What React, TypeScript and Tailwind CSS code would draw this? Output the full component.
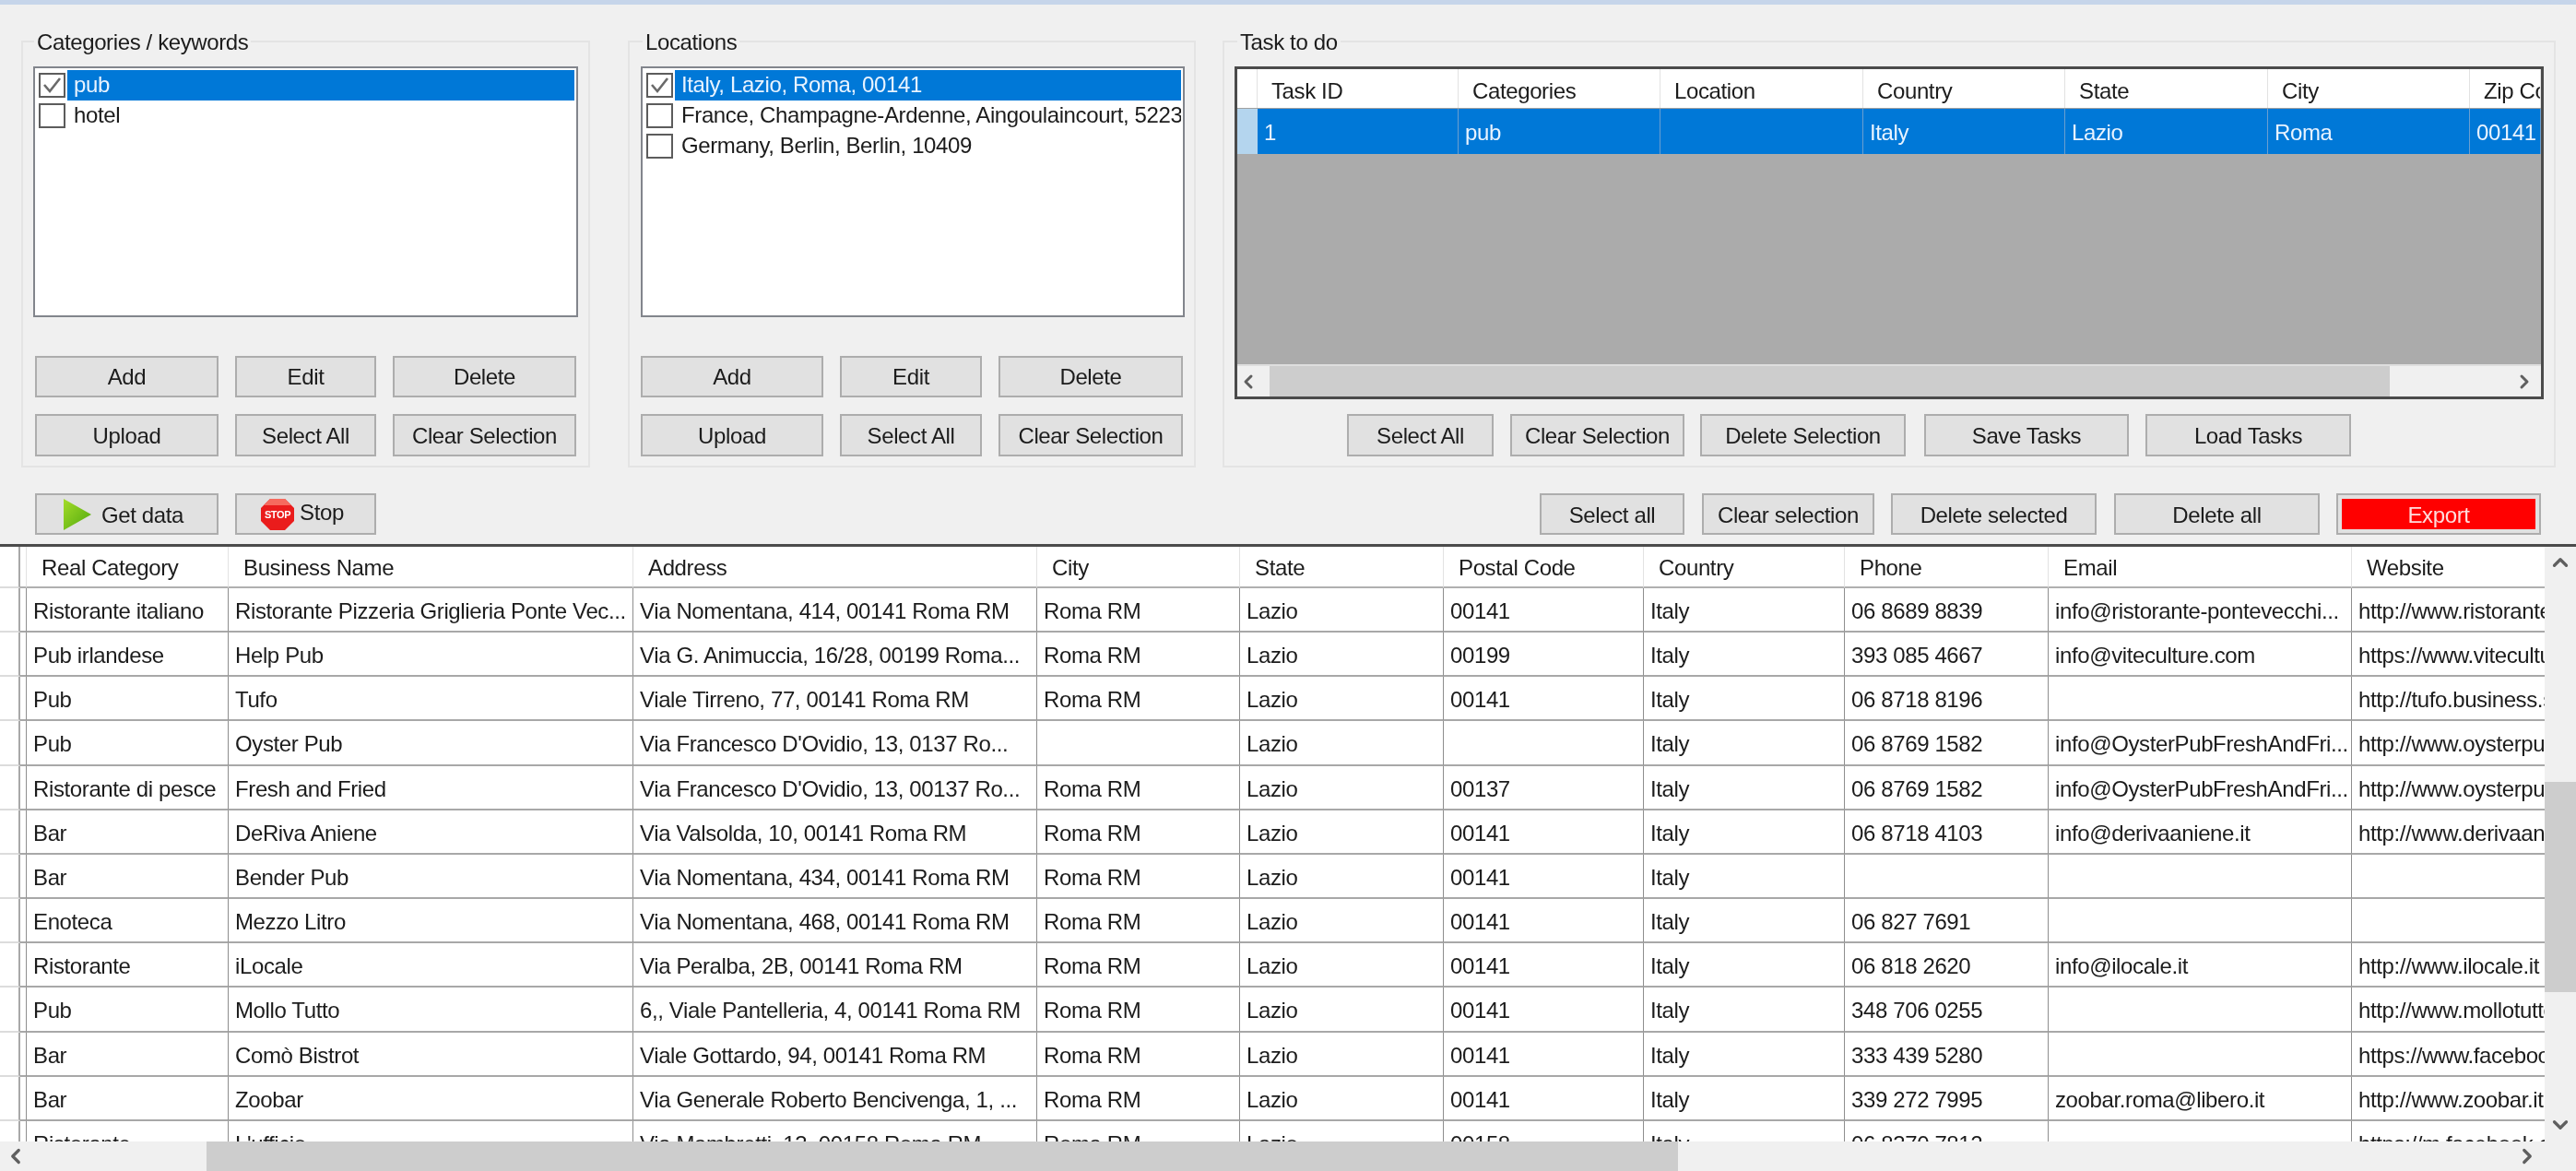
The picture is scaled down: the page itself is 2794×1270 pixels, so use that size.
import * as React from "react";
import { ChevronDown, ChevronLeft, ChevronRight, ChevronUp } from "lucide-react";

const MAIN_COLS =
  "grid grid-cols-[28px_219px_439px_438px_220px_221px_217px_218px_221px_329px_210px]";
const TASK_COLS =
  "grid grid-cols-[22px_218px_219px_220px_219px_220px_219px_77px]";

const mainHeaders = [
  "Real Category",
  "Business Name",
  "Address",
  "City",
  "State",
  "Postal Code",
  "Country",
  "Phone",
  "Email",
  "Website",
];

const results = [
  ["Ristorante italiano", "Ristorante Pizzeria Griglieria Ponte Vec...", "Via Nomentana, 414, 00141 Roma RM", "Roma RM", "Lazio", "00141", "Italy", "06 8689 8839", "info@ristorante-pontevecchi...", "http://www.ristorante-pontevecchio.it"],
  ["Pub irlandese", "Help Pub", "Via G. Animuccia, 16/28, 00199 Roma...", "Roma RM", "Lazio", "00199", "Italy", "393 085 4667", "info@viteculture.com", "https://www.viteculture.com"],
  ["Pub", "Tufo", "Viale Tirreno, 77, 00141 Roma RM", "Roma RM", "Lazio", "00141", "Italy", "06 8718 8196", "", "http://tufo.business.site"],
  ["Pub", "Oyster Pub", "Via Francesco D'Ovidio, 13, 0137 Ro...", "", "Lazio", "", "Italy", "06 8769 1582", "info@OysterPubFreshAndFri...", "http://www.oysterpub.it"],
  ["Ristorante di pesce", "Fresh and Fried", "Via Francesco D'Ovidio, 13, 00137 Ro...", "Roma RM", "Lazio", "00137", "Italy", "06 8769 1582", "info@OysterPubFreshAndFri...", "http://www.oysterpub.it"],
  ["Bar", "DeRiva Aniene", "Via Valsolda, 10, 00141 Roma RM", "Roma RM", "Lazio", "00141", "Italy", "06 8718 4103", "info@derivaaniene.it", "http://www.derivaaniene.it"],
  ["Bar", "Bender Pub", "Via Nomentana, 434, 00141 Roma RM", "Roma RM", "Lazio", "00141", "Italy", "", "", ""],
  ["Enoteca", "Mezzo Litro", "Via Nomentana, 468, 00141 Roma RM", "Roma RM", "Lazio", "00141", "Italy", "06 827 7691", "", ""],
  ["Ristorante", "iLocale", "Via Peralba, 2B, 00141 Roma RM", "Roma RM", "Lazio", "00141", "Italy", "06 818 2620", "info@ilocale.it", "http://www.ilocale.it"],
  ["Pub", "Mollo Tutto", "6,, Viale Pantelleria, 4, 00141 Roma RM", "Roma RM", "Lazio", "00141", "Italy", "348 706 0255", "", "http://www.mollotutto.it"],
  ["Bar", "Comò Bistrot", "Viale Gottardo, 94, 00141 Roma RM", "Roma RM", "Lazio", "00141", "Italy", "333 439 5280", "", "https://www.facebook.com"],
  ["Bar", "Zoobar", "Via Generale Roberto Bencivenga, 1, ...", "Roma RM", "Lazio", "00141", "Italy", "339 272 7995", "zoobar.roma@libero.it", "http://www.zoobar.it"],
  ["Ristorante", "L'ufficio", "Via Mambretti, 13, 00158 Roma RM", "Roma RM", "Lazio", "00158", "Italy", "06 8370 7812", "", "https://m.facebook.com"],
];

function Btn({
  className,
  children,
}: {
  className: string;
  children: React.ReactNode;
}) {
  return (
    <button
      className={`flex shrink-0 items-center justify-center border-2 border-[#adadad] bg-[#e1e1e1] text-[#1c1c1c] ${className}`}
    >
      {children}
    </button>
  );
}

function CheckBox({ checked }: { checked?: boolean }) {
  return (
    <span className="flex h-[27px] w-[29px] shrink-0 items-center justify-center border-2 border-[#5c5c5c] bg-white">
      {checked && (
        <svg width="23" height="21" viewBox="0 0 23 21" fill="none">
          <path d="M3 10 L9 17 L20 3" stroke="#6a6a6a" strokeWidth="2.6" />
        </svg>
      )}
    </span>
  );
}

function CheckList({
  items,
  className,
}: {
  items: string[];
  className: string;
}) {
  return (
    <div
      className={`h-[272px] overflow-hidden border-2 border-[#82858c] bg-white pt-[2px] pr-[2px] pl-[4px] ${className}`}
    >
      {items.map((item, i) => (
        <div key={item} className="flex h-[33px] items-center">
          <CheckBox checked={i === 0} />
          <div
            className={`ml-[2px] h-full min-w-0 flex-1 overflow-hidden pl-[7px] leading-[32px] whitespace-nowrap ${
              i === 0 ? "bg-[#0078d7] text-[#e8f3ff]" : "text-[#1c1c1c]"
            }`}
          >
            {item}
          </div>
        </div>
      ))}
    </div>
  );
}

function Group({
  title,
  className,
  titleClass,
  children,
}: {
  title: string;
  className: string;
  titleClass: string;
  children: React.ReactNode;
}) {
  return (
    <div
      className={`relative h-[463px] shrink-0 border-2 border-[#e4e4e4] pt-[26px] ${className}`}
    >
      <div
        className={`absolute -top-[14px] bg-[#f0f0f0] px-[3px] leading-[28px] text-[#1c1c1c] ${titleClass}`}
      >
        {title}
      </div>
      {children}
    </div>
  );
}

function PlayIcon() {
  return (
    <svg width="32" height="36" viewBox="0 0 32 36">
      <defs>
        <linearGradient id="playFill" x1="0" y1="0" x2="1" y2="1">
          <stop offset="0" stopColor="#a4dc28" />
          <stop offset="1" stopColor="#4fa80e" />
        </linearGradient>
      </defs>
      <path d="M1 1 L31 18 L1 35 Z" fill="url(#playFill)" />
    </svg>
  );
}

function StopIcon() {
  return (
    <svg width="36" height="34" viewBox="0 0 36 34">
      <path
        d="M10 0 H26 L36 10 V24 L26 34 H10 L0 24 V10 Z"
        fill="#ea1c1c"
      />
      <path d="M10 0 H26 L33 7 H3 Z" fill="#f66a5e" />
      <text
        x="18"
        y="21"
        textAnchor="middle"
        fontSize="11"
        fontWeight="700"
        fill="#ffffff"
        fontFamily="'Liberation Sans', sans-serif"
      >
        STOP
      </text>
    </svg>
  );
}

export default function App() {
  return (
    <div className="flex h-[1270px] w-[2794px] flex-col overflow-hidden bg-[#f0f0f0] font-['Liberation_Sans',sans-serif] text-[24px] tracking-[-0.38px] blur-[0.6px]">
      <div className="h-[5px] shrink-0 bg-[#c6d5ea]" />

      {/* Top panels */}
      <div className="mt-[39px] flex shrink-0 pl-[23px]">
        <Group
          title="Categories / keywords"
          titleClass="left-[12px]"
          className="w-[617px] pl-[11px]"
        >
          <CheckList items={["pub", "hotel"]} className="w-[591px]" />
          <div className="mt-[42px] ml-[2px] flex gap-[18px]">
            <Btn className="h-[45px] w-[199px] pt-[1px]">Add</Btn>
            <Btn className="h-[45px] w-[153px] pt-[1px]">Edit</Btn>
            <Btn className="h-[45px] w-[199px] pt-[1px]">Delete</Btn>
          </div>
          <div className="mt-[18px] ml-[2px] flex gap-[18px]">
            <Btn className="h-[46px] w-[199px] pt-[2px]">Upload</Btn>
            <Btn className="h-[46px] w-[153px] pt-[2px]">Select All</Btn>
            <Btn className="h-[46px] w-[199px] pt-[2px]">Clear Selection</Btn>
          </div>
        </Group>

        <Group
          title="Locations"
          titleClass="left-[14px]"
          className="ml-[41px] w-[616px] pl-[12px]"
        >
          <CheckList
            items={[
              "Italy, Lazio, Roma, 00141",
              "France, Champagne-Ardenne, Aingoulaincourt, 52230",
              "Germany, Berlin, Berlin, 10409",
            ]}
            className="w-[590px]"
          />
          <div className="mt-[42px] flex gap-[18px]">
            <Btn className="h-[45px] w-[198px] pt-[1px]">Add</Btn>
            <Btn className="h-[45px] w-[154px] pt-[1px]">Edit</Btn>
            <Btn className="h-[45px] w-[200px] pt-[1px]">Delete</Btn>
          </div>
          <div className="mt-[18px] flex gap-[18px]">
            <Btn className="h-[46px] w-[198px] pt-[2px]">Upload</Btn>
            <Btn className="h-[46px] w-[154px] pt-[2px]">Select All</Btn>
            <Btn className="h-[46px] w-[200px] pt-[2px]">Clear Selection</Btn>
          </div>
        </Group>

        <Group
          title="Task to do"
          titleClass="left-[14px]"
          className="ml-[29px] w-[1446px] pl-[11px]"
        >
          <div className="flex h-[361px] w-[1420px] flex-col border-3 border-[#4b4b4b] bg-[#ababab]">
            <div className={`${TASK_COLS} h-[43px] shrink-0 border-b border-[#a0a0a0] bg-white text-[#1c1c1c]`}>
              {["", "Task ID", "Categories", "Location", "Country", "State", "City", "Zip Code"].map(
                (h, i) => (
                  <div
                    key={i}
                    className="overflow-hidden border-r border-[#e2e2e2] pl-[15px] leading-[47px] whitespace-nowrap"
                  >
                    {h}
                  </div>
                )
              )}
            </div>
            <div className={`${TASK_COLS} h-[49px] shrink-0 bg-[#0078d7] text-[#e8f3ff]`}>
              <div className="bg-[#b4d5ee]" />
              {["1", "pub", "", "Italy", "Lazio", "Roma", "00141"].map((c, i) => (
                <div
                  key={i}
                  className="overflow-hidden border-r border-[#6a9fd0] pl-[7px] leading-[52px] whitespace-nowrap"
                >
                  {c}
                </div>
              ))}
            </div>
            <div className="flex-1" />
            <div className="flex h-[35px] shrink-0 items-stretch border-t-2 border-[#dedede] bg-[#f0f0f0]">
              <div className="flex w-[35px] items-center justify-start">
                <ChevronLeft size={24} strokeWidth={3} className="text-[#5f5f5f]" />
              </div>
              <div className="w-[1215px] bg-[#cdcdcd]" />
              <div className="flex flex-1 items-center justify-end pr-[6px]">
                <ChevronRight size={24} strokeWidth={3} className="text-[#5f5f5f]" />
              </div>
            </div>
          </div>
          <div className="mt-[16px] ml-[122px] flex">
            <Btn className="h-[46px] w-[159px] pt-[2px]">Select All</Btn>
            <Btn className="ml-[18px] h-[46px] w-[189px] pt-[2px]">Clear Selection</Btn>
            <Btn className="ml-[17px] h-[46px] w-[223px] pt-[2px]">Delete Selection</Btn>
            <Btn className="ml-[20px] h-[46px] w-[222px] pt-[2px]">Save Tasks</Btn>
            <Btn className="ml-[18px] h-[46px] w-[223px] pt-[2px]">Load Tasks</Btn>
          </div>
        </Group>
      </div>

      {/* Action row */}
      <div className="mt-[28px] flex h-[45px] shrink-0 pr-[38px] pl-[38px]">
        <Btn className="h-[45px] w-[199px] justify-start pl-[28px]">
          <PlayIcon />
          <span className="mt-[2px] ml-[10px]">Get data</span>
        </Btn>
        <Btn className="ml-[18px] h-[45px] w-[153px] justify-start pl-[26px]">
          <StopIcon />
          <span className="mb-[3px] ml-[6px]">Stop</span>
        </Btn>
        <Btn className="ml-auto h-[45px] w-[157px] pt-[2px]">Select all</Btn>
        <Btn className="ml-[19px] h-[45px] w-[187px] pt-[2px]">Clear selection</Btn>
        <Btn className="ml-[18px] h-[45px] w-[223px] pt-[2px]">Delete selected</Btn>
        <Btn className="ml-[19px] h-[45px] w-[223px] pt-[2px]">Delete all</Btn>
        <Btn className="ml-[18px] h-[45px] w-[222px] p-[4px]">
          <span className="flex h-full w-full items-center justify-center bg-[#ff0000] pt-[2px] text-[#ffdcdc]">
            Export
          </span>
        </Btn>
      </div>

      {/* Results grid */}
      <div className="mt-[10px] flex min-h-0 flex-1 flex-col border-t-3 border-[#4b4b4b]">
        <div className="flex min-h-0 flex-1">
          <div className="w-[2760px] shrink-0 overflow-hidden bg-white text-[#1c1c1c]">
            <div className={`${MAIN_COLS} h-[45px]`}>
              <div className="flex">
                <div className="w-[22px] border-r-2 border-b-2 border-r-[#a8a8a8] border-b-[#dcdcdc]" />
                <div className="flex-1 border-b-2 border-[#b0b0b0]" />
              </div>
              {mainHeaders.map((h) => (
                <div
                  key={h}
                  className="overflow-hidden border-b-2 border-l border-b-[#b0b0b0] border-l-[#e2e2e2] pl-[16px] leading-[46px] whitespace-nowrap"
                >
                  {h}
                </div>
              ))}
            </div>
            {results.map((row, r) => (
              <div key={r} className={`${MAIN_COLS} h-[48.17px]`}>
                <div className="flex">
                  <div className="w-[22px] border-r-2 border-b-2 border-r-[#a8a8a8] border-b-[#dcdcdc]" />
                  <div className="flex-1 border-b-2 border-[#a8a8a8]" />
                </div>
                {row.map((c, i) => (
                  <div
                    key={i}
                    className="overflow-hidden border-b-2 border-l border-b-[#a8a8a8] border-l-[#8e8e8e] pl-[7px] leading-[49px] whitespace-nowrap"
                  >
                    {c}
                  </div>
                ))}
              </div>
            ))}
          </div>
          <div className="flex w-[34px] flex-col items-center bg-[#f0f0f0]">
            <div className="flex h-[34px] w-full shrink-0 items-center justify-center">
              <ChevronUp size={26} strokeWidth={3} className="text-[#5f5f5f]" />
            </div>
            <div className="h-[221px] shrink-0" />
            <div className="h-[228px] w-full shrink-0 bg-[#cdcdcd]" />
            <div className="flex-1" />
            <div className="flex h-[36px] w-full shrink-0 items-center justify-center">
              <ChevronDown size={26} strokeWidth={3} className="text-[#5f5f5f]" />
            </div>
          </div>
        </div>
        <div className="flex h-[32px] shrink-0 bg-[#f0f0f0]">
          <div className="flex w-[224px] items-center pl-[4px]">
            <ChevronLeft size={26} strokeWidth={3} className="text-[#5f5f5f]" />
          </div>
          <div className="w-[1596px] bg-[#cdcdcd]" />
          <div className="flex flex-1 items-center justify-end pr-[40px]">
            <ChevronRight size={26} strokeWidth={3} className="text-[#5f5f5f]" />
          </div>
        </div>
      </div>
    </div>
  );
}
